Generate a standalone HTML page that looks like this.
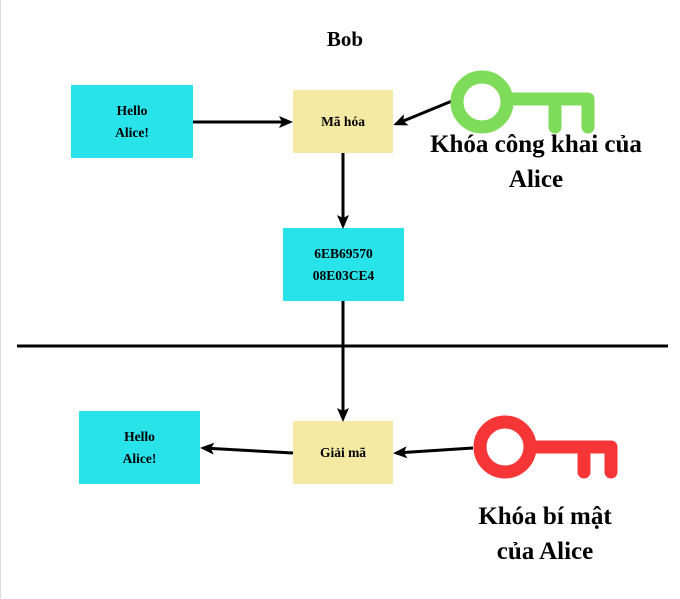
<!DOCTYPE html>
<html><head><style>
body{margin:0;width:680px;height:599px;background:#fff;position:relative;overflow:hidden;font-family:"Liberation Serif",serif;font-weight:bold}
.b{position:absolute;display:flex;align-items:center;justify-content:center;text-align:center;font-size:13.5px;line-height:22px}
.c{background:#29e3eb}.y{background:#f5eaa4}
.t{position:absolute;font-size:25px;text-align:center;line-height:35px}
</style></head><body>
<div style="position:absolute;left:0;top:0;width:1px;height:599px;background:#ddd"></div>
<div class="t" style="left:300px;top:22px;width:90px;font-size:21px">Bob</div>
<div class="b c" style="left:71px;top:85px;width:122px;height:73px">Hello<br>Alice!</div>
<div class="b y" style="left:293px;top:90px;width:100px;height:63px">Mã hóa</div>
<div class="b c" style="left:283px;top:228px;width:121px;height:73px">6EB69570<br>08E03CE4</div>
<div class="b c" style="left:79px;top:411px;width:121px;height:73px">Hello<br>Alice!</div>
<div class="b y" style="left:293px;top:421px;width:100px;height:63px">Giải mã</div>
<div class="t" style="left:416px;top:127px;width:240px">Khóa công khai của<br>Alice</div>
<div class="t" style="left:465px;top:499px;width:160px">Khóa bí mật<br>của Alice</div>
<svg width="680" height="599" style="position:absolute;left:0;top:0">
<defs><marker id="a" markerWidth="14" markerHeight="12" refX="11" refY="6" orient="auto" markerUnits="userSpaceOnUse" viewBox="0 0 14 12"><path d="M0,0 L14,6 L0,12 L3,6 Z" fill="#000"/></marker></defs>
<g stroke="#000" stroke-width="3" fill="none">
<line x1="17" y1="346" x2="668" y2="346"/>
<line x1="193" y1="122" x2="290" y2="122" marker-end="url(#a)"/>
<line x1="343" y1="153" x2="343" y2="226" marker-end="url(#a)"/>
<line x1="343" y1="301" x2="343" y2="419" marker-end="url(#a)"/>
<line x1="452" y1="101" x2="396" y2="124" marker-end="url(#a)"/>
<line x1="473" y1="448" x2="396" y2="453" marker-end="url(#a)"/>
<line x1="293" y1="453" x2="203" y2="448" marker-end="url(#a)"/>
</g>
<g fill="none" stroke="#7fdb5a" stroke-width="13" stroke-linecap="round" stroke-linejoin="round">
<circle cx="482" cy="102" r="25"/>
<path d="M507 99 H588 V127 M555 99 V127"/>
</g>
<g fill="none" stroke="#f63636" stroke-width="13" stroke-linecap="round" stroke-linejoin="round">
<circle cx="505" cy="447" r="25"/>
<path d="M530 447 H611 V472 M584 447 V472"/>
</g>
</svg>
</body></html>
